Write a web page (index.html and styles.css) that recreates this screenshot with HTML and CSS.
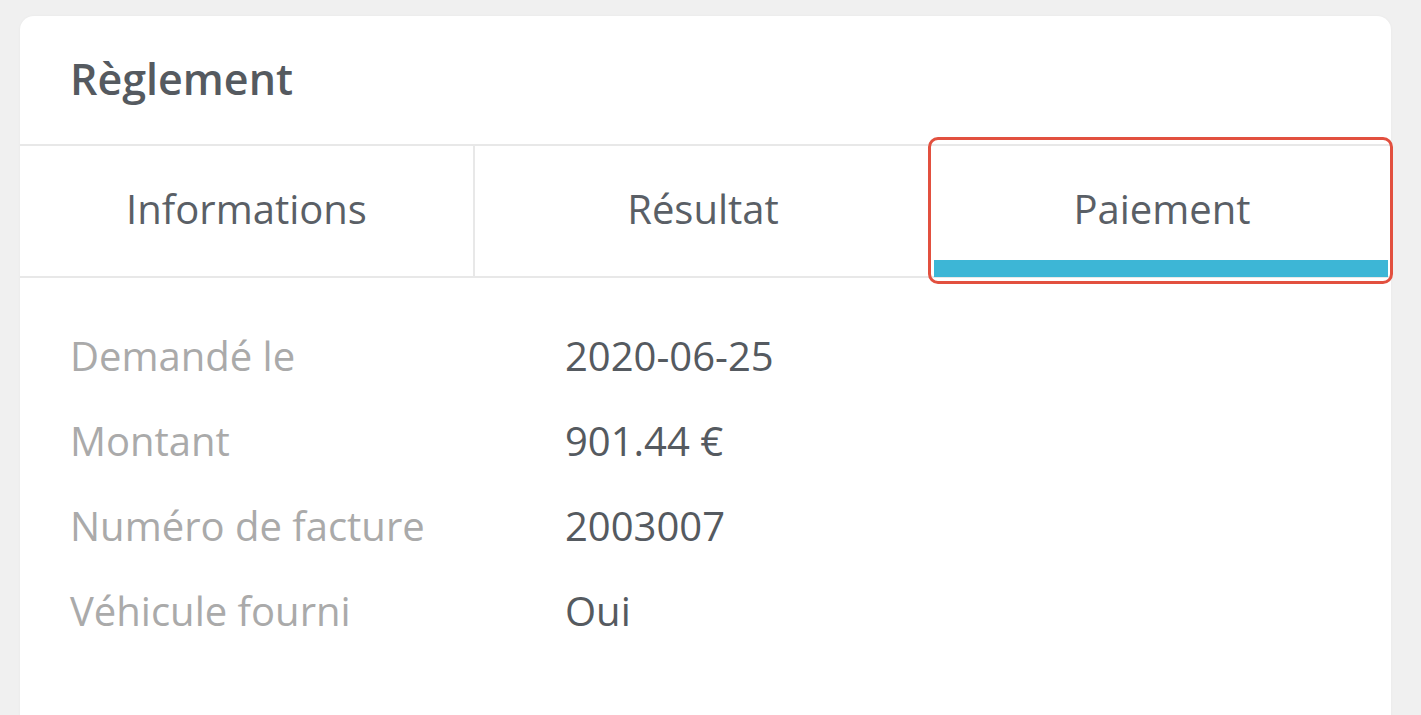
FILE: index.html
```html
<!DOCTYPE html>
<html lang="fr">
<head>
<meta charset="utf-8">
<link rel="stylesheet" href="styles.css">
</head>
<body>
<div class="page">
  <section class="card">
    <header class="card-header">Règlement</header>
    <nav class="tabs">
      <div class="tab">Informations</div>
      <div class="tab">Résultat</div>
      <div class="tab active">Paiement<span class="highlight"></span></div>
    </nav>
    <div class="details">
      <div class="label">Demandé le</div><div class="value">2020-06-25</div>
      <div class="label">Montant</div><div class="value">901.44 €</div>
      <div class="label">Numéro de facture</div><div class="value">2003007</div>
      <div class="label">Véhicule fourni</div><div class="value">Oui</div>
    </div>
  </section>
</div>
</body>
</html>
```
FILE: styles.css
```css
html, body {
  margin: 0;
  padding: 0;
  background: #f0f0f0;
  font-family: "Open Sans", "Lato", sans-serif;
}
.page {
  padding: 16px 30px 0 20px;
  height: 715px;
  box-sizing: border-box;
  overflow: hidden;
}
.card {
  background: #fff;
  border-radius: 14px 14px 0 0;
  height: 760px;
  box-shadow: 0 0 3px rgba(0,0,0,0.04);
}
.card-header {
  height: 130px;
  box-sizing: border-box;
  padding: 0 50px 4px;
  display: flex;
  align-items: center;
  font-size: 43px;
  font-weight: 600;
  color: #555a60;
  border-bottom: 2px solid #e8e8e8;
}
.tabs {
  display: grid;
  grid-template-columns: 453px 458px 1fr;
  height: 132px;
  box-sizing: border-box;
  border-bottom: 2px solid #e8e8e8;
}
.tab {
  position: relative;
  display: flex;
  align-items: center;
  justify-content: center;
  font-size: 40px;
  color: #5a5f66;
  padding-bottom: 6px;
}
.tab + .tab {
  border-left: 2px solid #e8e8e8;
}
.tab.active {
  border-left: none;
  padding-left: 2px;
}
.tab.active::before {
  content: "";
  position: absolute;
  left: -3px;
  top: -9px;
  right: -2px;
  bottom: -8px;
  border: 3px solid #e2503f;
  border-radius: 10px;
}
.highlight {
  position: absolute;
  left: 3px;
  right: 3px;
  bottom: -1px;
  height: 17px;
  background: #3db6d6;
}
.details {
  display: grid;
  grid-template-columns: 495px 1fr;
  grid-auto-rows: 85px;
  padding: 35px 50px 0 50px;
  font-size: 40px;
  align-items: center;
}
.label {
  color: #aaaaaa;
}
.value {
  color: #555a60;
}
```
